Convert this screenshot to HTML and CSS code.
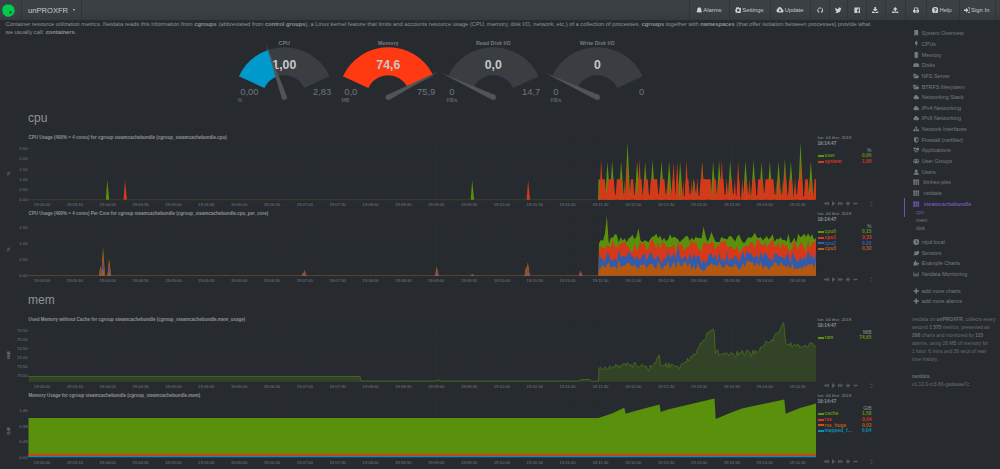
FILE: index.html
```
<!DOCTYPE html>
<html lang="en">
  <head>
    <meta charset="UTF-8" />
    <meta name="viewport" content="width=device-width, initial-scale=1.0" />
    <title>unPROXFR netdata dashboard</title>
    <link rel="stylesheet" href="styles.css">
  </head>
  <body>
    <svg class="symbols" width="0" height="0">
      <symbol id="bell" viewBox="0 0 16 16"><path d="M8 0l1 1.500C12 2 13 4 13 7c0 3 1 4 2 6H1c1-2 2-3 2-6 0-3 1-5 4-5.500zM6 14h4a2 2 0 0 1-4 0z"/></symbol>
      <symbol id="cog" viewBox="0 0 16 16"><path fill-rule="evenodd" d="M6.500 0h3l.4 2.200 1.700.8L13.500 1.500l2 2L14 5.500l.6 1.300L16 7v3l-2 .4-.7 1.600 1.200 1.800-2 2-1.900-1.300-1.500.6L8.700 16h-2l-.5-2-1.600-.6-1.900 1.200-2-2L2 10.800 1.500 9.500 0 9V6.500L2 6l.7-1.600L1.500 2.700l2-2L5.300 2 6 1.800zM8 5a3 3 0 1 0 0 6 3 3 0 0 0 0-6z"/></symbol>
      <symbol id="cloud" viewBox="0 0 16 16"><path d="M4 14a4 4 0 0 1-1.500-7.500A4.800 4.800 0 0 1 11.500 5 3 3 0 0 1 13 7.500 3.300 3.300 0 0 1 12.500 14z"/></symbol>
      <symbol id="cloud-down" viewBox="0 0 16 16"><path fill-rule="evenodd" d="M4 14a4 4 0 0 1-1.500-7.500A4.800 4.800 0 0 1 11.500 5 3 3 0 0 1 13 7.500 3.300 3.300 0 0 1 12.500 14zM7 6v3H5l3 3.500L11 9H9V6z"/></symbol>
      <symbol id="github" viewBox="0 0 16 16"><path d="M8 1a7 7 0 0 0-2.500 13.600v-2C3.500 13 3 11 2.500 10.500c2 .2 1.500 1.500 3 1 .1-.5.300-.9.600-1.100C4 10 3 9 3 7c0-1 .3-1.600.8-2.200-.2-.6-.2-1.300.1-2 1 0 1.600.500 2.200.9a8 8 0 0 1 3.800 0c.6-.4 1.200-.9 2.200-.9.3.7.3 1.400.1 2 .5.600.8 1.200.8 2.200 0 2-1 3-3.100 3.400.5.500.6 1 .6 1.800v2.400A7 7 0 0 0 8 1z"/></symbol>
      <symbol id="twitter" viewBox="0 0 16 16"><path d="M16 3.500l-1.700 1.300C14.500 10 11 14.500 5 14.500c-2 0-3.600-.5-5-1.400 1.800.1 3.300-.3 4.700-1.400-1.500-.2-2.500-1-3-2.300h1.400C1.500 8.800.7 7.500.7 6l1.400.4C.7 5.300.3 3.500 1.200 2c1.700 2 4 3.300 6.700 3.500C7.300 1.700 11.500.3 13.600 2.700l2-.8-1.300 1.800z"/></symbol>
      <symbol id="facebook" viewBox="0 0 16 16"><path fill-rule="evenodd" d="M1 1h14v14h-4v-5h2V8h-2V6.500q0-1 2-.8v-2C10 3.200 8.500 4.500 8.500 6.500V8H7v2h1.500v5H1z"/></symbol>
      <symbol id="download" viewBox="0 0 16 16"><path d="M6 0h4v5h4L8 11 2 5h4zM0 11h4l4 3 4-3h4v5H0z"/></symbol>
      <symbol id="upload" viewBox="0 0 16 16"><path d="M6 11h4V6h4L8 0 2 6h4zM0 11h5v2h6v-2h5v5H0z"/></symbol>
      <symbol id="print" viewBox="0 0 16 16"><path fill-rule="evenodd" d="M3 1h8l2 2v4h1q2 0 2 2v4h-3v2H3v-2H0V9q0-2 2-2h1zM5 3v5h6V4H9.500V3zM5 11v2.500h6V11z"/></symbol>
      <symbol id="question" viewBox="0 0 16 16"><path fill-rule="evenodd" d="M8 0a8 8 0 1 0 0 16A8 8 0 0 0 8 0zM4.500 5.500C5 2 11.500 2 11.500 6c0 2-2.500 2-2.500 4H6.700C6.500 7 9 7.500 9 6c0-1.200-2-1.200-2.300.5zM6.700 11H9v2H6.700z"/></symbol>
      <symbol id="signin" viewBox="0 0 16 16"><path d="M5 2l6 6-6 6v-4H0V6h5zM10 1h3q3 0 3 3v8q0 3-3 3h-3v-2h3q1 0 1-1V4q0-1-1-1h-3z"/></symbol>
      <symbol id="bookmark" viewBox="0 0 16 16"><path d="M3 0h10v16l-5-4-5 4z"/></symbol>
      <symbol id="bolt" viewBox="0 0 16 16"><path d="M6 0h5L9 5l4-1-6 12 1-8-4 1z"/></symbol>
      <symbol id="chip" viewBox="0 0 16 16"><path d="M4 0h8v16H4zM2 2h1v2H2zm0 4h1v2H2zm0 4h1v2H2zm11-8h1v2h-1zm0 4h1v2h-1zm0 4h1v2h-1z"/></symbol>
      <symbol id="hdd" viewBox="0 0 16 16"><path fill-rule="evenodd" d="M3 3h10l3 5v5H0V8zM9 10v1.500h1.500V10zm3 0v1.500h1.500V10z"/></symbol>
      <symbol id="folder" viewBox="0 0 16 16"><path d="M0 2h5l1.500 2H12v2H4L0 12zM4.500 7H16l-3 7H1z"/></symbol>
      <symbol id="sitemap" viewBox="0 0 16 16"><path d="M6 1h4v4H9v2h5v3h2v4h-5v-4h1V8.500H9V10h1v4H6v-4h1V8.500H4V10h1v4H0v-4h2V7h5V5H6z"/></symbol>
      <symbol id="shield" viewBox="0 0 16 16"><path fill-rule="evenodd" d="M8 0l6 2v6c0 4-3 6-6 8-3-2-6-4-6-8V2zm0 2.500v11c2-1.500 4-3 4-5.500V4z"/></symbol>
      <symbol id="heart" viewBox="0 0 16 16"><path fill-rule="evenodd" d="M8 4C6 0 0 1 0 6h4l1.500-2L8 10l2-4 1 2h5C14 11 10 13 8 15 6 13 3 11 1 8h4l3 5 2-4h5l1-2c0-6-6-7-8-3z"/></symbol>
      <symbol id="users" viewBox="0 0 16 16"><circle cx="8" cy="5" r="3"/><circle cx="2.500" cy="5" r="2"/><circle cx="13.500" cy="5" r="2"/><path d="M3 14c0-4 2-5.500 5-5.500s5 1.500 5 5.500zM0 12V8h4l-2 4zm16 0V8h-4l2 4z"/></symbol>
      <symbol id="user" viewBox="0 0 16 16"><circle cx="8" cy="5" r="4"/><path d="M1 15c0-5 3-5 4.500-6h5C12 10 15 10 15 15z"/></symbol>
      <symbol id="grid" viewBox="0 0 16 16"><path d="M0 1h4.700v4H0zm5.700 0h4.600v4H5.700zm5.600 0H16v4h-4.700zM0 6h4.700v4H0zm5.700 0h4.600v4H5.700zm5.600 0H16v4h-4.700zM0 11h4.700v4H0zm5.700 0h4.600v4H5.700zm5.600 0H16v4h-4.700z"/></symbol>
      <symbol id="clock" viewBox="0 0 16 16"><path fill-rule="evenodd" d="M8 0a8 8 0 1 0 0 16A8 8 0 0 0 8 0zM7 3h2v4.500l3 2-1 1.500-4-2.500z"/></symbol>
      <symbol id="leaf" viewBox="0 0 16 16"><path d="M15 1c2 7-1 13-8 13-2 0-3-.5-4-1l-2 2-1-1c2-4 5-6 9-7-4 0-6 1-7 3C1 5 5 3 9 3c3 0 5 0 6-2z"/></symbol>
      <symbol id="puzzle" viewBox="0 0 16 16"><path d="M1 6h4C3 3 4 1 6 1s3 2 1 5h4v3c3-2 5-1 5 1s-2 3-5 1v4H8c1-3-3-3-2 0H1z"/></symbol>
      <symbol id="chart" viewBox="0 0 16 16"><path d="M0 2h1.500v10.500H16V14H0zM3 8h2v4H3zm3-3h2v7H6zm3 2h2v5H9zm3-4h2v9h-2z"/></symbol>
      <symbol id="plus" viewBox="0 0 16 16"><path d="M6 1h4v5h5v4h-5v5H6v-5H1V6h5z"/></symbol>
    </svg>

    <nav class="navbar">
      <div class="brand">
        <svg viewBox="0 0 14 14"><path d="M1 3L3 1.500 4 .5l6 .2 3 3 .7 4-1.500 4-4 2-4-.3L1 10.500.2 6z" fill="#00cb51"/><circle cx="9.200" cy="9" r="1.400" fill="#20502f"/></svg>
      </div>
      <div class="host">unPROXFR <span class="caret"></span></div>
      <div class="nav-right">
        <a class="wide alarms"><svg><use href="#bell"/></svg>Alarms</a>
        <a class="wide settings"><svg><use href="#cog"/></svg>Settings</a>
        <a class="wide update"><svg class="big"><use href="#cloud-down"/></svg>Update</a>
        <a><svg><use href="#github"/></svg></a>
        <a><svg><use href="#twitter"/></svg></a>
        <a><svg><use href="#facebook"/></svg></a>
        <a><svg><use href="#download"/></svg></a>
        <a class="roomy"><svg><use href="#upload"/></svg></a>
        <a class="roomy"><svg><use href="#print"/></svg></a>
        <a class="wide help"><svg><use href="#question"/></svg>Help</a>
        <a class="wide signin"><svg><use href="#signin"/></svg>Sign In</a>
      </div>
    </nav>

    <div class="page">
      <main>
        <p class="intro">
          <span class="first-line">Container resource utilization metrics. Netdata reads this information from <b>cgroups</b> (abbreviated from <b>control groups</b>), a Linux kernel feature that limits and accounts resource usage (CPU, memory, disk I/O, network, etc.) of a collection of processes. <b>cgroups</b> together with <b>namespaces</b> (that offer isolation between processes) provide what</span><br>
          we usually call: <b>containers</b>.
        </p>

        <div class="gauges" id="gauges"></div>

        <h2>cpu</h2>
        <section class="chart">
          <h3>CPU Usage (400% = 4 cores) for cgroup steamcachebundle (cgroup_steamcachebundle.cpu)</h3>
          <svg class="plot" id="cpuChart"></svg>
          <div class="legend">
            <span>lun. 04 févr. 2019</span><b class="time">19:14:47</b>
            <span class="unit">%</span>
            <b class="row green"><i></i>user<em>0,00</em></b>
            <b class="row red"><i></i>system<em>1,00</em></b>
          </div>
        </section>
        <section class="chart">
          <h3>CPU Usage (400% = 4 cores) Per Core for cgroup steamcachebundle (cgroup_steamcachebundle.cpu_per_core)</h3>
          <svg class="plot" id="coreChart"></svg>
          <div class="legend">
            <span>lun. 04 févr. 2019</span><b class="time">19:14:47</b>
            <span class="unit">%</span>
            <b class="row green"><i></i>cpu0<em>0,15</em></b>
            <b class="row red"><i></i>cpu1<em>0,33</em></b>
            <b class="row blue"><i></i>cpu2<em>0,20</em></b>
            <b class="row orange"><i></i>cpu3<em>0,32</em></b>
          </div>
        </section>

        <h2>mem</h2>
        <section class="chart">
          <h3>Used Memory without Cache for cgroup steamcachebundle (cgroup_steamcachebundle.mem_usage)</h3>
          <svg class="plot" id="usageChart"></svg>
          <div class="legend">
            <span>lun. 04 févr. 2019</span><b class="time">19:14:47</b>
            <span class="unit">MiB</span>
            <b class="row green"><i></i>ram<em>74,65</em></b>
          </div>
        </section>
        <section class="chart">
          <h3>Memory Usage for cgroup steamcachebundle (cgroup_steamcachebundle.mem)</h3>
          <svg class="plot" id="memChart"></svg>
          <div class="legend">
            <span>lun. 04 févr. 2019</span><b class="time">19:14:47</b>
            <span class="unit">GiB</span>
            <b class="row green"><i></i>cache<em>1,58</em></b>
            <b class="row red"><i></i>rss<em>0,04</em></b>
            <b class="row orange"><i></i>rss_huge<em>0,03</em></b>
            <b class="row cyan"><i></i>mapped_f...<em>0,04</em></b>
          </div>
        </section>
      </main>

      <aside>
        <ul class="menu">
          <li><svg><use href="#bookmark"/></svg>System Overview</li>
          <li><svg><use href="#bolt"/></svg>CPUs</li>
          <li><svg><use href="#chip"/></svg>Memory</li>
          <li><svg><use href="#hdd"/></svg>Disks</li>
          <li><svg><use href="#folder"/></svg>NFS Server</li>
          <li><svg><use href="#folder"/></svg>BTRFS filesystem</li>
          <li><svg><use href="#cloud"/></svg>Networking Stack</li>
          <li><svg><use href="#cloud"/></svg>IPv4 Networking</li>
          <li><svg><use href="#cloud"/></svg>IPv6 Networking</li>
          <li><svg><use href="#sitemap"/></svg>Network Interfaces</li>
          <li><svg><use href="#shield"/></svg>Firewall (netfilter)</li>
          <li><svg><use href="#heart"/></svg>Applications</li>
          <li><svg><use href="#users"/></svg>User Groups</li>
          <li><svg><use href="#user"/></svg>Users</li>
          <li class="box"><svg><use href="#grid"/></svg>binhex-plex</li>
          <li class="box"><svg><use href="#grid"/></svg>netdata</li>
        </ul>
        <div class="current">
          <div class="open"><svg><use href="#grid"/></svg>steamcachebundle</div>
          <div class="sub active">cpu</div>
        </div>
        <div class="sub">mem</div>
        <div class="sub">disk</div>
        <ul class="menu after">
          <li><svg><use href="#clock"/></svg>ntpd local</li>
          <li><svg><use href="#leaf"/></svg>Sensors</li>
          <li><svg><use href="#puzzle"/></svg>Example Charts</li>
          <li><svg><use href="#chart"/></svg>Netdata Monitoring</li>
        </ul>
        <ul class="menu more">
          <li><svg><use href="#plus"/></svg>add more charts</li>
          <li><svg><use href="#plus"/></svg>add more alarms</li>
        </ul>
        <p class="info">netdata on <b>unPROXFR</b>, collects every<br>second <b>1 575</b> metrics, presented as<br><b>298</b> charts and monitored by <b>115</b><br>alarms, using 26 MB of memory for<br>1 hour, 6 mins and 36 secs of real-<br>time history.</p>
        <p class="info"><b>netdata</b><br>v1.12.0-rc3-66-gadaaae7c</p>
      </aside>
    </div>
    <script src="script.js"></script>
  </body>
</html>
```

FILE: styles.css
```
body {
  margin: 0;
  height: 469px;
  overflow: hidden;
  background-color: #272b30;
  color: #8f9396;
  font-family: "Liberation Sans", Arial, sans-serif;
  font-size: 5.6px;
}
.symbols {
  display: block;
  height: 0;
}
h2, h3, p, ul {
  margin: 0;
  padding: 0;
  list-style: none;
}

/* top bar */
.navbar {
  display: flex;
  height: 20px;
  background: linear-gradient(#3c4146, #3a3f44 60%, #363b40);
  color: #c8c8c8;
}
.brand {
  width: 22px;
  border-right: 1px solid #30353a;
  box-sizing: border-box;
  padding: 4px 0 0 2px;
}
.brand svg {
  display: block;
  width: 13px;
  height: 13px;
}
.host {
  display: flex;
  align-items: center;
  width: 60px;
  box-sizing: border-box;
  padding-left: 6px;
  border-right: 1px solid #30353a;
  font-size: 7.6px;
}
.caret {
  margin-left: 5px;
  border: 1.5px solid transparent;
  border-top: 2px solid #c8c8c8;
  border-bottom: 0;
}
.nav-right {
  display: flex;
  margin-left: auto;
  margin-right: 4px;
}
.nav-right a {
  display: flex;
  align-items: center;
  justify-content: center;
  gap: 1px;
  box-sizing: border-box;
  width: 18.6px;
  border-left: 1px solid #31363b;
  white-space: nowrap;
}
.nav-right a:last-child {
  border-right: 1px solid #31363b;
}
.nav-right svg {
  width: 6.5px;
  height: 6.5px;
  fill: #d0d0d0;
}
.nav-right svg.big {
  width: 8px;
  height: 7.5px;
}
.nav-right .wide {
  width: 40.5px;
  padding-right: 1.5px;
  font-size: 5.9px;
}
.nav-right .roomy {
  width: 20.5px;
}
.nav-right .help {
  width: 33px;
}
.nav-right .signin {
  width: 37.5px;
}

.page {
  display: flex;
}
main {
  width: 900px;
}
.intro {
  height: 18px;
  padding-left: 5.5px;
  line-height: 8.3px;
  font-size: 5.74px;
  white-space: nowrap;
}
.gauges {
  display: flex;
  height: 69px;
  padding-left: 232px;
}
.gauges svg {
  width: 104.3px;
  height: 69px;
  overflow: visible;
}
h2 {
  height: 26px;
  box-sizing: border-box;
  padding-left: 28px;
  line-height: 23px;
  font-size: 12px;
  font-weight: normal;
}
.chart + h2 {
  height: 30px;
  line-height: 30px;
}

/* charts */
.chart {
  display: grid;
  grid-template: 9px 67px / 817.5px 57px;
}
.chart h3 {
  padding-left: 28.5px;
  line-height: 9px;
  font-size: 4.5px;
  white-space: nowrap;
}
.plot {
  grid-row: 2;
  width: 817.5px;
  height: 67px;
  overflow: visible;
}
.plot text {
  font-size: 4.2px;
  fill: #777b7f;
}
.legend {
  grid-area: 1 / 2 / 3 / 3;
  display: flex;
  flex-direction: column;
  width: 54px;
  padding-top: 1.9px;
  font-size: 4.4px;
  line-height: 5.9px;
}
.time {
  font-size: 4.7px;
  line-height: 6.2px;
}
.unit {
  text-align: right;
  font-size: 5px;
  line-height: 6px;
}
.row {
  display: flex;
  align-items: center;
  height: 5.8px;
  font-size: 4.9px;
}
.row i {
  width: 6px;
  height: 2px;
  margin-right: 1px;
  background-color: currentColor;
}
.row em {
  margin-left: auto;
  font-style: normal;
}
.green { color: #5f9410; }
.red { color: #d63a1c; }
.blue { color: #335fb2; }
.orange { color: #bc5c10; }
.cyan { color: #0890ba; }

/* sidebar */
aside {
  box-sizing: border-box;
  width: 96px;
  padding: 8px 0 0 4px;
  color: #777b7f;
}
.menu li, .open {
  display: flex;
  align-items: center;
  height: 10.65px;
  padding-left: 9px;
  white-space: nowrap;
}
.menu li {
  font-size: 5.4px;
}
.menu svg, .open svg {
  width: 6.5px;
  height: 6px;
  margin-right: 2.2px;
  fill: currentColor;
}
.menu .box svg, .open svg {
  margin-right: 4px;
}
.current {
  height: 18.7px;
  margin-left: -0.5px;
  border-left: 1px solid #6f53a0;
  color: #7754b0;
}
.current .open {
  padding-left: 8.5px;
  font-weight: bold;
  font-size: 5.3px;
}
.sub {
  height: 7.7px;
  padding-left: 12px;
  line-height: 7.7px;
  font-size: 5px;
}
.current .sub {
  padding-left: 11.5px;
}
.after {
  margin-top: 4.5px;
}
.more {
  margin-top: 6px;
}
.info {
  margin: 9px 0 8px 8px;
  line-height: 8.15px;
  font-size: 4.9px;
  color: #696d71;
  white-space: nowrap;
}
.info + .info {
  margin-top: 0;
}
```

FILE: script.js
```
const colors = {
  green: "#5a910c",
  red: "#d4391a",
  blue: "#325cab",
  orange: "#b3580e",
  cyan: "#0890ba",
};

// Gauges
const gauges = [
  { title: "CPU", value: "1,00", min: "0,00", max: "2,83", unit: "%", pct: 0.355, color: "#0099cc" },
  { title: "Memory", value: "74,6", min: "0,0", max: "75,9", unit: "MB", pct: 0.983, color: "#ff3912" },
  { title: "Read Disk I/O", value: "0,0", min: "0", max: "14,7", unit: "KB/s", pct: 0 },
  { title: "Write Disk I/O", value: "0", min: "0", max: "0", unit: "KB/s", pct: 0 },
];

function polar(r, deg) {
  const a = (deg * Math.PI) / 180;
  return `${(52.3 - r * Math.cos(a)).toFixed(2)} ${(59.3 - r * Math.sin(a)).toFixed(2)}`;
}

function band(from, to, color) {
  return `<path fill="${color}" d="M${polar(50, from)}A50 50 0 0 1 ${polar(50, to)}L${polar(22, to)}A22 22 0 0 0 ${polar(22, from)}z"/>`;
}

document.getElementById("gauges").innerHTML = gauges.map((g) => {
  const angle = 25 + g.pct * 130;
  return `<svg viewBox="0 0 104.3 69">
    ${band(25, 155, "#3a3d41")}
    ${g.pct ? band(25, angle, g.color) : ""}
    <text x="52.3" y="7.3" font-size="5.4" font-weight="bold" fill="#777b7f" text-anchor="middle">${g.title}</text>
    <text x="52.3" y="31" font-size="12.3" font-weight="bold" fill="#c8c8c8" text-anchor="middle">${g.value}</text>
    <text x="8.3" y="57" font-size="9.4" fill="#72767a">${g.min}</text>
    <text x="99.3" y="57" font-size="9.4" fill="#72767a" text-anchor="end">${g.max}</text>
    <text x="5.5" y="63.8" font-size="5.2" fill="#72767a">${g.unit}</text>
    <path fill="#505357" d="M${polar(58, angle)}L${polar(2.7, angle + 90)}L${polar(2.7, angle - 90)}z"/>
    <circle cx="52.3" cy="59.3" r="2.7" fill="#505357"/>
  </svg>`;
}).join("");

// Axes and grid shared by all charts
const LEFT = 28.5;
const RIGHT = 816;
const BASE = 57.7;

function axes(unit, ticks, first, step) {
  let out = `<text transform="translate(10 ${unit === "%" ? 31.5 : 31}) rotate(-90)" text-anchor="middle" font-weight="bold">${unit}</text>`;
  ticks.forEach((label, i) => {
    const y = first - i * step;
    out += `<text x="27.5" y="${y + 1.5}" text-anchor="end">${label}</text>`;
    out += `<path d="M${LEFT} ${y}H${RIGHT}" stroke="#2c3136" stroke-width=".6"/>`;
  });
  for (let i = 0; i < 24; i++) {
    const x = 42 + i * 32.85;
    const min = String(3 + Math.floor(i / 2)).padStart(2, "0");
    out += `<path d="M${x} 0V${BASE}" stroke="#2c3136" stroke-width=".6"/>`;
    out += `<text x="${x}" y="63.6" text-anchor="middle">19:${min}:${i % 2 ? "30" : "00"}</text>`;
  }
  // toolbox icons and resize handle
  out += `<g fill="#55595d"><path d="M826.5 59.5v4l-2.700-2zM829 59.5v4l-2.700-2zM832 59v5l3.500-2.500zM838 59.5v4l2.700-2zM840.5 59.5v4l2.700-2zM847.300 59.5h1.400v1.300h1.300v1.400h-1.300v1.300h-1.400v-1.300H846v-1.400h1.300zM853.5 60.8h4v1.400h-4z"/>
    <path fill="#414549" d="M870 61l1.500-2 1.500 2zM870 62.5l1.500 2 1.500-2z"/></g>`;
  return out;
}

function area(points, color, extra = "") {
  return `<polygon points="${points.map((p) => p.join(",")).join(" ")}" fill="${color}" ${extra}/>`;
}

function spike(x, top, color, w = 1.3, base = BASE) {
  return area([[x - w, base], [x - 0.2, top], [x + w, base]], color);
}

// small seeded generator, keeps the curves the same on every load
let seed = 11;
function rnd() {
  seed = (seed * 16807) % 2147483647;
  return seed / 2147483647;
}

// CPU usage
let svg = axes("%", ["0.00", "0.50", "1.00", "1.50", "2.00", "2.50"], 57.9, 10.25);
svg += `<path d="M28.5 57.7H600" stroke="#3c4528" stroke-width=".7"/>`;
svg += spike(107.5, 38, colors.green, 1.7) + spike(125.2, 38, colors.red, 1.7);
svg += spike(472.4, 38, colors.green, 1.7) + spike(528.3, 38, colors.red, 1.7);
const userPeaks = [[83, 95], [97, 92], [124, 93], [143, 35], [172, 94], [196, 96], [218, 90], [245, 92], [268, 94], [301, 95], [342, 145], [367, 100], [400, 94], [418, 92], [451, 92], [497, 92], [521, 90], [545, 96], [570, 92], [596, 94], [615, 86], [633, 92], [662, 35], [693, 94]];
const systemPeaks = [[64, 90], [143, 95], [179, 88], [281, 95], [292, 95], [320, 90], [367, 92], [426, 90], [475, 94], [615, 110], [662, 90]];
const dips = [79, 106, 130, 137, 148, 164, 170, 189, 208, 236, 258, 264, 273, 287, 298, 306, 313, 330, 337, 347, 357, 396, 412, 435, 445, 460, 469, 482, 491, 504, 513, 530, 552, 585, 591, 603, 609, 623, 640, 650, 671, 688, 699];
svg += userPeaks.map(([x, y]) => spike(580 + x / 3, y / 3 - 12, colors.green, 2.6)).join("");
svg += area([[598, BASE], [598.6, 37.5], [600, 37.5], [600, BASE]], colors.green);
let system = [[599, BASE], [600, 37.3]];
dips.forEach((d) => {
  const x = 580 + d / 3;
  const low = d === 298 || d === 482 ? 56.5 : 51 + rnd() * 4;
  system.push([x - 1.6, 37.3], [x - 0.4, low], [x + 0.4, low], [x + 1.6, 37.3]);
});
system = system.filter((p, i) => !i || p[0] >= system[i - 1][0]);
system.push([816, 37.3], [816, BASE]);
svg += area(system, colors.red);
svg += systemPeaks.map(([x, y]) => spike(580 + x / 3, y / 3 - 12, colors.red, 2)).join("");
document.getElementById("cpuChart").innerHTML = svg;

// CPU usage per core, stacked
svg = axes("%", ["0.00", "0.50", "1.00", "1.50"], 57.9, 16.1);
svg += `<path d="M28.5 57.5H599" stroke="#6e4c2e" stroke-width=".7"/>`;
[[100.7, 47.5], [103.2, 28.5], [109.3, 40.5], [303.3, 54.5], [304.7, 52], [436.9, 48.5], [472.4, 56], [526.3, 48], [528, 44], [580.7, 52.5]].forEach(([x, top]) => {
  const h = BASE - top;
  svg += spike(x, top, colors.green, 1.8);
  svg += spike(x, top + h * 0.15, colors.red, 1.8);
  svg += spike(x, top + h * 0.5, colors.blue, 1.8);
  svg += spike(x, top + h * 0.75, colors.orange, 1.8);
});
const cores = { orange: [], blue: [], red: [], green: [] };
const tall = { 4: 20, 20: 9, 53: 6, 57: 5, 79: 8, 101: 7 };
const noise = (size) => (rnd() + rnd() - 1) * size;
for (let i = 0; i <= 110; i++) {
  const x = 599 + i * 1.973;
  const orange = 47.5 + noise(6.5);
  const blue = orange - 9 + noise(6.5);
  const red = Math.min(28 + noise(9), blue - 4);
  const green = Math.min(20.5 + noise(6.5), red - 2) - (tall[i] || 0);
  cores.orange.push([x, orange]);
  cores.blue.push([x, blue]);
  cores.red.push([x, red]);
  cores.green.push([x, green]);
}
["green", "red", "blue", "orange"].forEach((c) => {
  svg += area([[598.5, BASE], ...cores[c], [816, BASE]], colors[c]);
});
document.getElementById("coreChart").innerHTML = svg;

// Memory without cache
svg = axes("MiB", ["73.00", "73.50", "74.00", "74.50", "75.00", "75.50"], 51.9, 9.04);
const key = [[57, 205], [85, 208], [100, 200], [150, 196], [190, 200], [215, 202], [238, 165], [242, 198], [295, 200], [315, 186], [345, 165], [365, 130], [385, 100], [403, 95], [406, 160], [440, 160], [530, 158], [550, 140], [575, 118], [595, 95], [611, 68], [617, 128], [640, 138], [685, 138], [690, 128], [707, 137]];
const line = [[28.5, 52.5], [360, 52.5], [361, 57], [437, 57], [438, 55.5], [440, 57], [580, 57], [581, 55.5], [590, 55.5], [591, 57.2], [598.5, 57.2]];
for (let k = 0; k < key.length - 1; k++) {
  const [x0, y0] = key[k];
  const [x1, y1] = key[k + 1];
  const n = Math.max(1, Math.round((x1 - x0) / 4));
  for (let j = 0; j < n; j++) {
    const jitter = j ? noise(14) : 0;
    line.push([580 + (x0 + ((x1 - x0) * j) / n) / 3, (y0 + ((y1 - y0) * j) / n + jitter) / 3 - 24]);
  }
}
line.push([816, 21.5]);
svg += area([[28.5, BASE], ...line, [816, BASE]], "#344427", 'fill-opacity=".95"');
svg += `<polyline points="${line.map((p) => p.join(",")).join(" ")}" fill="none" stroke="#47701a" stroke-width=".8"/>`;
document.getElementById("usageChart").innerHTML = svg;

// Memory
svg = axes("GiB", ["0.00", "0.49", "0.98", "1.46"], 57.5, 15.7);
const cache = [[28.5, 18.1], [598.5, 18.1], [612, 13.5], [624.3, 7.7], [625.7, 13.8], [635, 11], [659.5, 4.5], [660.7, 12], [668, 9.5], [714.5, -1.5], [715.7, 19], [730, 13], [742, 8.5], [784.3, -0.5], [785.7, 13.8], [800, 8], [816, 3.5]];
svg += area([[28.5, 57], ...cache, [816, 57]], colors.green);
svg += `<path d="M28.5 53.8h787.5v2.2H28.5z" fill="#c8451a"/><path d="M28.5 56h787.5v1.200H28.5z" fill="${colors.cyan}"/>`;
document.getElementById("memChart").innerHTML = svg;
```
